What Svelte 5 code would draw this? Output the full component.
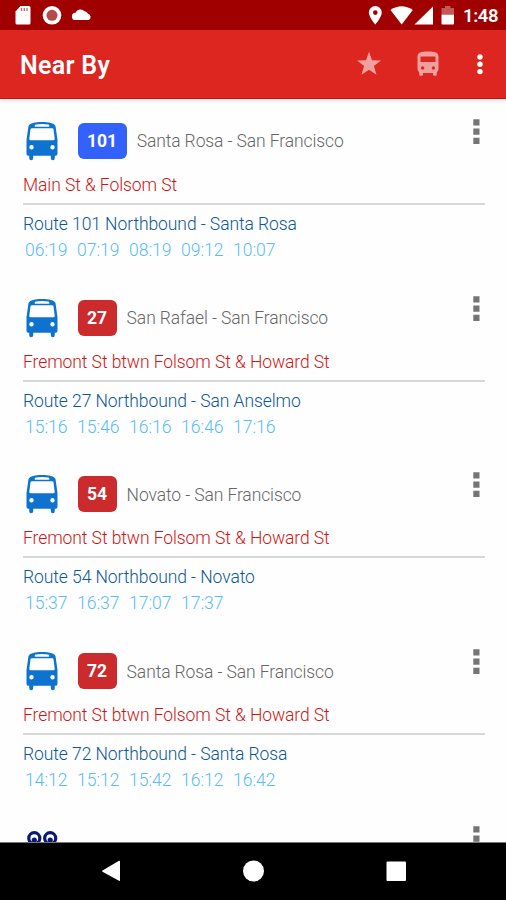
<script>
  const stops = [
    {
      route: '101',
      color: 'blue',
      title: 'Santa Rosa - San Francisco',
      stop: 'Main St & Folsom St',
      direction: 'Route 101 Northbound - Santa Rosa',
      times: ['06:19', '07:19', '08:19', '09:12', '10:07']
    },
    {
      route: '27',
      color: 'red',
      title: 'San Rafael - San Francisco',
      stop: 'Fremont St btwn Folsom St & Howard St',
      direction: 'Route 27 Northbound - San Anselmo',
      times: ['15:16', '15:46', '16:16', '16:46', '17:16']
    },
    {
      route: '54',
      color: 'red',
      title: 'Novato - San Francisco',
      stop: 'Fremont St btwn Folsom St & Howard St',
      direction: 'Route 54 Northbound - Novato',
      times: ['15:37', '16:37', '17:07', '17:37']
    },
    {
      route: '72',
      color: 'red',
      title: 'Santa Rosa - San Francisco',
      stop: 'Fremont St btwn Folsom St & Howard St',
      direction: 'Route 72 Northbound - Santa Rosa',
      times: ['14:12', '15:12', '15:42', '16:12', '16:42']
    }
  ];
</script>

{#snippet more()}
  <button class="more" aria-label="More">
    <svg width="7" height="26" viewBox="0 0 7 26">
      <path d="M.3 .3h6.2v6.2H.3zM.3 9.5h6.2v6.2H.3zM.3 18.8h6.2v6.2H.3z" fill="#757575" />
    </svg>
  </button>
{/snippet}

<div class="screen">
  <div class="status">
    <svg width="110" height="30" viewBox="0 0 110 30">
      <path d="M20.5 6H29q1.5 0 1.5 1.5V23q0 1.5-1.5 1.5H17q-1.5 0-1.5-1.5V11.5z" fill="#fff" />
      <path d="M21.500 8v3M24.300 8v3M27 8v3" stroke="#a00000" stroke-width="1.300" opacity=".6" />
      <circle cx="52" cy="15.300" r="9.300" fill="#fff" />
      <circle cx="52" cy="15.300" r="5.500" fill="#b64a4a" />
      <path d="M75.500 20a3.600 3.600 0 0 1 0-7.200A5.500 5.500 0 0 1 84.500 11.200a4.500 4.500 0 0 1 3.500 2.500 3.300 3.300 0 0 1 .5 6.300z" fill="#fff" />
    </svg>
    <div class="status-right">
      <svg width="88" height="30" viewBox="366 0 88 30" fill="#fff">
        <path d="M375.300 6a6.500 6.500 0 0 0-6.500 6.500c0 4.500 6.500 12 6.500 12s6.500-7.500 6.500-12a6.500 6.500 0 0 0-6.500-6.500zm0 4.300a2.300 2.300 0 1 1 0 4.600 2.300 2.300 0 0 1 0-4.600z" />
        <path d="M390.500 10Q401.500 2.500 412.800 10L401.700 24.500z" />
        <path d="M433 6.500V24.500H414.500z" />
        <path d="M445 6h5.500v2h3.500v7h-12.500V8h3.500z" opacity=".35" />
        <path d="M441.500 14.700H454V23.500q0 1-1 1h-10.500q-1 0-1-1z" />
      </svg>
      <span class="clock">1:48</span>
    </div>
  </div>

  <header>
    <h1>Near By</h1>
    <div class="actions">
      <svg width="26" height="26" viewBox="0 0 26 26">
        <path d="M13 .7l3 8.500 9 .3-7.100 5.500 2.600 8.700-7.500-5-7.500 5 2.600-8.700L1 9.500l9-.3z" fill="#f0a09d" />
      </svg>
      <svg width="22" height="26" viewBox="0 0 22 26">
        <path fill-rule="evenodd" d="M.5 5.500C.5 1.500 4 .5 11 .5s10.500 1 10.500 5V18q0 2-1.700 3.300v2.200q0 1.200-1.200 1.200h-1.400q-1.200 0-1.200-1.200V22H6v1.500q0 1.200-1.200 1.200H3.400q-1.200 0-1.200-1.200v-2.200Q.5 20 .5 18zM3.500 5.500v5.500h15V5.500zM5.600 15.300a1.700 1.700 0 1 0 0 3.400 1.700 1.700 0 0 0 0-3.400zM16.400 15.300a1.700 1.700 0 1 0 0 3.400 1.700 1.700 0 0 0 0-3.400z" fill="#f0a09d" />
      </svg>
      <svg width="8" height="24" viewBox="0 0 8 24" fill="#fff">
        <circle cx="4" cy="5" r="2.700" />
        <circle cx="4" cy="12.300" r="2.700" />
        <circle cx="4" cy="19.600" r="2.700" />
      </svg>
    </div>
  </header>

  <main>
    {#each stops as item}
      <section class="card">
        <div class="card-head">
          <svg class="bus" width="34" height="40" viewBox="0 0 34 40">
            <path fill-rule="evenodd" d="M3.500 5C5 2 10 1 17 1s12 1 13.500 4l2 14v14q0 1.700-1.700 1.700h-1v2.300q0 2.200-2 2.200t-2-2.200v-2.300H8.200v2.300q0 2.200-2 2.200t-2-2.200v-2.300h-1q-1.700 0-1.700-1.700V19zM10.500 3.500Q8.500 5.500 10.500 5.800h13q2-.3 0-2.300-6.500-1-13 0zM5.500 8.300L4.300 17.700q-.2 1.500 1.500 1.500h22.400q1.700 0 1.500-1.500L28.500 8.300q-.2-1-1.300-1H6.800q-1.100 0-1.300 1zM6.500 24a2.200 2.200 0 1 0 0 4.400 2.200 2.200 0 0 0 0-4.400zM27.500 24a2.200 2.200 0 1 0 0 4.400 2.200 2.200 0 0 0 0-4.400z" fill="#0d73cf" />
          </svg>
          <span class={`badge ${item.color}`}>{item.route}</span>
          <span class="title">{item.title}</span>
          {@render more()}
        </div>
        <p class="stop">{item.stop}</p>
        <hr />
        <p class="direction">{item.direction}</p>
        <div class="times">
          {#each item.times as time}
            <span>{time}</span>
          {/each}
        </div>
      </section>
    {/each}

    <section class="card">
      <div class="card-head">
        <svg class="bus" width="34" height="40" viewBox="0 0 34 40">
          <g fill="#fff" stroke="#0a1872" stroke-width="3.200">
            <circle cx="9.300" cy="10.200" r="5.500" />
            <circle cx="25.200" cy="10.200" r="5.500" />
          </g>
          <circle cx="9.300" cy="12" r="2.600" fill="#0a1872" />
          <circle cx="25.200" cy="12" r="2.600" fill="#0a1872" />
        </svg>
        {@render more()}
      </div>
    </section>
  </main>

  <nav>
    <svg width="506" height="57" viewBox="0 0 506 57" fill="#fff">
      <path d="M119 17.800q1-.5 1 .5v19q0 1-1 .5L102.500 28.700q-.8-.7 0-1.200z" />
      <circle cx="253.500" cy="28" r="10.500" />
      <rect x="386.500" y="18.500" width="19.500" height="19.500" rx="1" />
    </svg>
  </nav>
</div>

<style>
  :global(body) {
    margin: 0;
    background: #fff;
  }
  .screen {
    width: 506px;
    height: 900px;
    display: flex;
    flex-direction: column;
    overflow: hidden;
    font-family: Roboto, sans-serif;
    background: #fefefe;
  }
  svg {
    display: block;
  }
  .status {
    height: 30px;
    flex: none;
    display: flex;
    justify-content: space-between;
    background: #a00000;
  }
  .status-right {
    display: flex;
    align-items: center;
    gap: 9px;
    padding-right: 8px;
  }
  .clock {
    width: 35px;
    color: #fff;
    font-size: 18.5px;
    font-weight: 600;
    line-height: 30px;
    padding-top: 2px;
    letter-spacing: -0.4px;
    white-space: nowrap;
  }
  header {
    height: 69px;
    flex: none;
    box-sizing: border-box;
    display: flex;
    align-items: center;
    justify-content: space-between;
    padding: 0 22px 0 20px;
    background: #dc261f;
    border-bottom: 1px solid #cf0d0b;
    box-shadow: 0 3px 3px #e6eeee;
    z-index: 1;
  }
  h1 {
    margin: 0;
    padding-top: 4px;
    color: #fff;
    font-size: 25px;
    font-weight: 600;
    line-height: 30px;
    letter-spacing: 0.3px;
  }
  .actions {
    display: flex;
    align-items: center;
  }
  .actions svg:nth-child(2) {
    margin: 0 37px 0 35px;
  }
  main {
    flex: 1;
    min-height: 0;
    overflow: hidden;
    padding-top: 0.4px;
  }
  .card {
    height: 176.75px;
    box-sizing: border-box;
    padding: 23.5px 21px 0 23px;
  }
  .card-head {
    height: 36px;
    display: flex;
    align-items: center;
  }
  .bus {
    margin: 0 18.5px 0 2px;
    flex: none;
  }
  .badge {
    height: 36px;
    padding: 0 9.5px;
    border-radius: 6px;
    color: #fff;
    font-size: 17.5px;
    font-weight: 700;
    line-height: 37px;
    box-sizing: border-box;
  }
  .blue {
    background: #3262fb;
  }
  .red {
    background: #cb2b2d;
  }
  .title {
    margin-left: 10px;
    color: #666;
    font-size: 17.5px;
    font-weight: 350;
    line-height: 26px;
    letter-spacing: -0.11px;
    padding-top: 1px;
    white-space: nowrap;
  }
  .more {
    margin: -18px 5.5px 0 auto;
    padding: 0;
    border: none;
    background: none;
  }
  p {
    margin: 0;
    font-size: 17.5px;
    font-weight: 350;
    line-height: 26px;
    letter-spacing: -0.08px;
    white-space: nowrap;
  }
  .stop {
    margin-top: 13px;
    color: #d01414;
  }
  hr {
    height: 2px;
    margin: 5px 0 6px;
    border: none;
    background: #d8d8d8;
  }
  .direction {
    color: #0b5896;
  }
  .times {
    display: flex;
    gap: 8px;
    padding-left: 2px;
    color: #58bcf8;
    font-size: 17.5px;
    font-weight: 350;
    line-height: 26px;
  }
  .times span {
    width: 44px;
    white-space: nowrap;
  }
  nav {
    height: 58px;
    flex: none;
    background: #000;
    border-top: 1px solid #777;
    box-sizing: border-box;
  }
</style>
